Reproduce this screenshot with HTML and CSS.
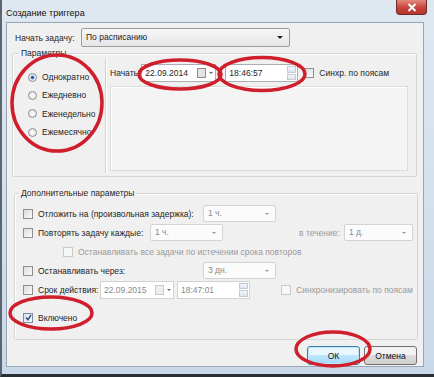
FILE: index.html
```html
<!DOCTYPE html>
<html lang="ru">
<head>
    <meta charset="UTF-8">
    <title>Создание триггера</title>
    <link rel="stylesheet" href="styles.css">
</head>
<body>
    <div class="window">
        <div class="titlebar">
            <span class="title">Создание триггера</span>
            <span class="close">
                <svg width="10" height="9" viewBox="0 0 10 9"><path d="M1.5 1 L8.5 8 M8.5 1 L1.5 8" stroke="#fff" stroke-width="2"/></svg>
            </span>
        </div>
        <div class="client">
            <div class="row start-row">
                <span class="start-label">Начать задачу:</span>
                <div class="combo combo-main">По расписанию<span class="arrow"></span></div>
            </div>

            <fieldset class="group params">
                <legend>Параметры</legend>
                <div class="params-body">
                    <div class="radios">
                        <label class="radio"><span class="dot on"></span>Однократно</label>
                        <label class="radio"><span class="dot"></span>Ежедневно</label>
                        <label class="radio"><span class="dot"></span>Еженедельно</label>
                        <label class="radio"><span class="dot"></span>Ежемесячно</label>
                    </div>
                    <div class="schedule">
                        <div class="row when-row">
                            <span class="when-label">Начать:</span>
                            <div class="field date">22.09.2014<span class="cal"></span><span class="mini-arrow"></span></div>
                            <div class="field time">18:46:57<span class="spin"><i></i><i></i></span></div>
                            <span class="check"></span>
                            <span>Синхр. по поясам</span>
                        </div>
                        <div class="panel"></div>
                    </div>
                </div>
            </fieldset>

            <fieldset class="group extra">
                <legend>Дополнительные параметры</legend>
                <div class="row opt">
                    <span class="check"></span><span class="opt-label w-delay">Отложить на (произвольная задержка):</span>
                    <div class="combo off small">1 ч.<span class="arrow"></span></div>
                </div>
                <div class="row opt">
                    <span class="check"></span><span class="opt-label w-repeat">Повторять задачу каждые:</span>
                    <div class="combo off small">1 ч.<span class="arrow"></span></div>
                    <span class="muted during">в течение:</span>
                    <div class="combo off day">1 д.<span class="arrow"></span></div>
                </div>
                <div class="row opt sub">
                    <span class="check off"></span><span class="muted">Останавливать все задачи по истечении срока повторов</span>
                </div>
                <div class="row opt">
                    <span class="check"></span><span class="opt-label w-delay">Останавливать через:</span>
                    <div class="combo off small">3 дн.<span class="arrow"></span></div>
                </div>
                <div class="row opt">
                    <span class="check"></span><span class="opt-label w-expire">Срок действия:</span>
                    <div class="field date off">22.09.2015<span class="cal"></span><span class="mini-arrow"></span></div>
                    <div class="field time off">18:47:01<span class="spin"><i></i><i></i></span></div>
                    <span class="check off sync"></span><span class="muted">Синхронизировать по поясам</span>
                </div>
                <div class="row opt enabled-row">
                    <span class="check on">
                        <svg width="7" height="7" viewBox="0 0 7 7"><path d="M1 3.5 L3 5.8 L6 0.8" fill="none" stroke="#2b4a86" stroke-width="1.4"/></svg>
                    </span>
                    <span>Включено</span>
                </div>
            </fieldset>

            <div class="buttons">
                <button class="btn default">ОК</button>
                <button class="btn">Отмена</button>
            </div>
        </div>

        <svg class="marks" width="434" height="377" viewBox="0 0 434 377">
            <g fill="none" stroke="#cf1f2c" stroke-width="3.5">
                <ellipse cx="57" cy="103" rx="45" ry="48"/>
                <ellipse cx="180" cy="74.5" rx="41" ry="14.5"/>
                <ellipse cx="262" cy="74" rx="43" ry="16.5"/>
                <ellipse cx="51" cy="313" rx="41" ry="16"/>
                <ellipse cx="333" cy="349" rx="37" ry="17"/>
            </g>
        </svg>
    </div>
</body>
</html>
```

FILE: styles.css
```css
body {
    margin: 0;
    font-family: "Liberation Sans", Arial, sans-serif;
    font-size: 8.5px;
    color: #1e1e1e;
    background: #5b6b78;
    white-space: nowrap;
}
.window {
    position: relative;
    width: 434px;
    height: 377px;
    box-sizing: border-box;
    padding: 0 10px 7px 6px;
    background: linear-gradient(#dfe8f1, #c9d9e9);
    border-left: 2px solid #5d6670;
    border-bottom: 3px solid #2a2f35;
    display: flex;
    flex-direction: column;
}
.titlebar {
    height: 22px;
    flex: none;
    display: flex;
    align-items: center;
    justify-content: space-between;
    margin-left: -2px;
}
.title {
    font-size: 9px;
    color: #111;
    margin-top: 3px;
}
.close {
    align-self: flex-start;
    width: 31px;
    height: 15px;
    margin-right: -3px;
    box-sizing: border-box;
    border: 1px solid #6b2b27;
    border-top: none;
    border-radius: 0 0 4px 4px;
    background: linear-gradient(#e28a7e, #c7423a 55%, #b5352d);
    display: flex;
    align-items: center;
    justify-content: center;
}
.client {
    flex: 1;
    margin-left: -2px;
    background: #f0f0f0;
    border: 1px solid #9aa6b3;
    padding: 5px 4px 0 8px;
    display: flex;
    flex-direction: column;
}
.row {
    display: flex;
    align-items: center;
}
.start-label {
    width: 66px;
}
.combo {
    position: relative;
    box-sizing: border-box;
    height: 19px;
    line-height: 17px;
    padding-left: 4px;
    border: 1px solid #9c9c9c;
    border-radius: 2px;
    background: linear-gradient(#f6f6f6, #e6e6e6);
}
.combo-main {
    width: 209px;
}
.arrow {
    position: absolute;
    right: 6px;
    top: 7px;
    border-left: 3px solid transparent;
    border-right: 3px solid transparent;
    border-top: 3px solid #222;
}
.combo.off {
    height: 17px;
    line-height: 15px;
    background: #fbfbfb;
    border-color: #d3d3d3;
    color: #8a8a8a;
}
.combo.off .arrow {
    border-left-width: 2px;
    border-right-width: 2px;
    border-top: 2px solid #9a9a9a;
    top: 7px;
}
.small {
    width: 73px;
}
.day {
    width: 69px;
}
.group {
    margin: 0;
    border: 1px solid #d6d6d6;
    box-shadow: inset 1px 1px #fff;
    border-radius: 2px;
}
.group legend {
    padding: 0 2px;
    line-height: 12px;
}
.params {
    margin: 0 2px 0 -3px;
    padding: 0;
}
.params legend {
    margin-left: 6px;
}
.params-body {
    display: flex;
    align-items: flex-start;
}
.radios {
    width: 93px;
    height: 114px;
    flex: none;
    padding-top: 9px;
    box-sizing: border-box;
    border-right: 1px solid #d0d0d0;
    box-shadow: 1px 0 #fff;
    margin-bottom: 3px;
}
.radio {
    display: flex;
    align-items: center;
    height: 18.3px;
    padding-left: 15px;
}
.dot {
    width: 7px;
    height: 7px;
    border-radius: 50%;
    border: 1px solid #8e8f8f;
    background: radial-gradient(#fff, #dcdcdc);
    margin-right: 5px;
}
.dot.on {
    background: radial-gradient(circle, #1f4f8b 0, #3d7bc4 30%, #dde6f0 45%, #f4f4f4 100%);
}
.schedule {
    flex: 1;
    padding: 5px 8px 0 4px;
}
.when-row {
    height: 18px;
}
.when-label {
    margin-right: 1px;
}
.field {
    position: relative;
    box-sizing: border-box;
    height: 18px;
    line-height: 16px;
    padding-left: 3px;
    border: 1px solid #abadb3;
    background: #fff;
}
.field.off {
    border-color: #d3d3d3;
    color: #8a8a8a;
}
.date {
    width: 75px;
    margin-right: 9px;
}
.time {
    width: 73px;
    margin-right: 6px;
}
.off.date {
    width: 74px;
    margin-right: 3px;
}
.cal {
    position: absolute;
    right: 9px;
    top: 3px;
    width: 7px;
    height: 8px;
    border: 1px solid #8d8d8d;
    background: #e4e4e4;
}
.off .cal {
    border-color: #c8c8c8;
    background: #eee;
}
.mini-arrow {
    position: absolute;
    right: 2px;
    top: 7px;
    border-left: 2px solid transparent;
    border-right: 2px solid transparent;
    border-top: 2px solid #666;
}
.spin {
    position: absolute;
    right: 1px;
    top: 1px;
    bottom: 1px;
    width: 9px;
    display: flex;
    flex-direction: column;
    gap: 1px;
}
.spin i {
    flex: 1;
    border: 1px solid #c4c9d2;
    background: linear-gradient(#f4f7fb, #dde4ee);
}
.check {
    width: 8px;
    height: 8px;
    flex: none;
    border: 1px solid #8f8f8f;
    background: linear-gradient(135deg, #dcdcdc, #fbfbfb);
    margin-right: 5px;
    display: flex;
    align-items: center;
    justify-content: center;
}
.check.off {
    border-color: #c9c9c9;
    background: #f7f7f7;
}
.panel {
    height: 85px;
    margin-top: 4px;
    box-sizing: border-box;
    border: 1px solid #dcdcdc;
    background: #f4f4f4;
    box-shadow: inset 1px 1px #fff;
}
.extra {
    margin: 10px 1px 0 -1px;
    padding: 5px 0 12px 8px;
}
.extra legend {
    margin-left: -4px;
}
.opt {
    height: 19px;
}
.opt-label {
    flex: none;
}
.w-delay {
    width: 165px;
}
.w-repeat {
    width: 112px;
}
.w-expire {
    width: 62px;
}
.muted {
    color: #9a9a9a;
}
.during {
    margin-left: 76px;
    width: 45px;
}
.sub {
    padding-left: 40px;
}
.sync {
    margin-left: 25px;
}
.enabled-row {
    margin-top: 9px;
}
.check.on {
    border-color: #7c8aa3;
    background: linear-gradient(135deg, #d9e1ec, #fbfcfe);
}
.buttons {
    display: flex;
    justify-content: flex-end;
    gap: 4px;
    margin-top: 6px;
    padding-right: 2px;
}
.btn {
    width: 53px;
    height: 19px;
    padding: 0;
    font: inherit;
    color: #111;
    border: 1px solid #707070;
    border-radius: 3px;
    background: linear-gradient(#f2f2f2 45%, #dddddd 50%, #cfcfcf);
}
.btn.default {
    border-color: #3c7fb1;
    box-shadow: inset 0 0 0 1px #bfe6f8;
    background: linear-gradient(#eaf6fd 45%, #bee6fd 50%, #a7d9f5);
}
.marks {
    position: absolute;
    left: -2px;
    top: 0;
    pointer-events: none;
}
```
